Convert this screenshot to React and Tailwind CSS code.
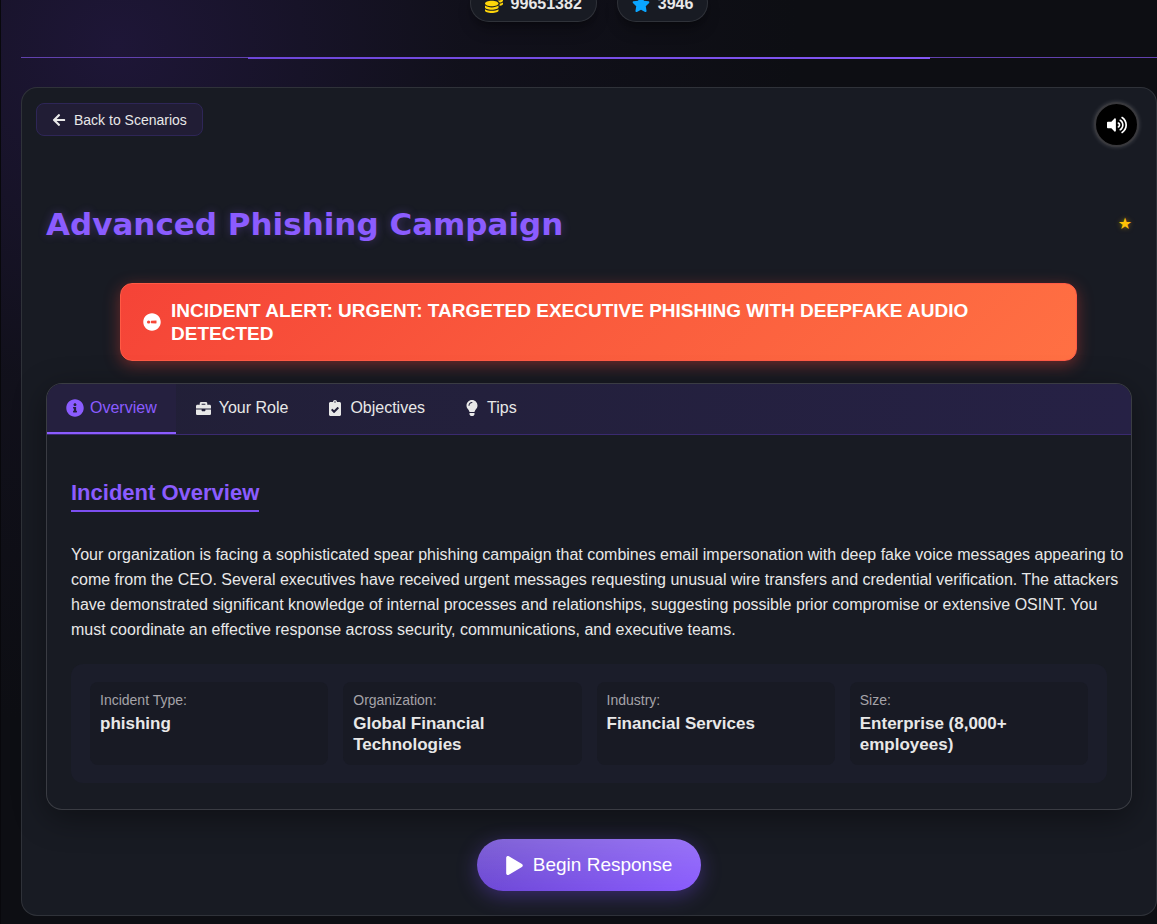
import { useState } from "react";
import {
  FaArrowLeft,
  FaBriefcase,
  FaClipboardCheck,
  FaCoins,
  FaExclamationCircle,
  FaInfoCircle,
  FaLightbulb,
  FaPlay,
  FaStar,
  FaVolumeUp,
} from "react-icons/fa";

const tabs = [
  { name: "Overview", Icon: FaInfoCircle, size: "size-[18px]" },
  { name: "Your Role", Icon: FaBriefcase, size: "size-[15px]" },
  { name: "Objectives", Icon: FaClipboardCheck, size: "h-4 w-3.5" },
  { name: "Tips", Icon: FaLightbulb, size: "h-4 w-3.5" },
];

const details = [
  ["Incident Type:", "phishing"],
  ["Organization:", "Global Financial Technologies"],
  ["Industry:", "Financial Services"],
  ["Size:", "Enterprise (8,000+ employees)"],
];

function Stat({ children }) {
  return (
    <div className="flex h-[38px] items-center gap-2 rounded-full border border-white/10 bg-[#181b23] px-3.5 pt-0.5 text-base font-bold text-[#e8e8e8] shadow-lg shadow-black/30">
      {children}
    </div>
  );
}

function Header() {
  return (
    <header>
      <div className="-mt-4 flex justify-center gap-5 border-b border-[#6141ae] pb-[35px]">
        <Stat>
          <FaCoins className="size-[18px] text-[#ffd60a]" />
          <span>99651382</span>
        </Stat>
        <Stat>
          <FaStar className="size-[18px] text-[#0aa5ff]" />
          <span>3946</span>
        </Stat>
      </div>
      <div className="mx-auto -mt-px h-0.5 w-3/5 bg-linear-to-r from-[#6d46d8] to-[#8357f5]" />
    </header>
  );
}

function Briefing() {
  const [active, setActive] = useState("Overview");
  return (
    <section className="mt-[22px] overflow-hidden rounded-2xl border border-white/15 bg-[#181b23] shadow-[0_8px_32px_rgba(0,0,0,0.4)]">
      <div role="tablist" className="flex border-b border-[#3a2a70] bg-linear-to-r from-[#211f36] to-[#262145]">
        {tabs.map(({ name, Icon, size }) => (
          <button
            key={name}
            type="button"
            role="tab"
            aria-selected={active === name}
            onClick={() => setActive(name)}
            className={
              active === name
                ? "flex h-[50px] items-center gap-1.5 border-b-2 border-[#8b5cff] bg-[#25203f] px-[19px] text-base text-[#8b5cff]"
                : "flex h-[50px] items-center gap-2 border-b-2 border-transparent px-5 text-base text-[#e8e8e8]"
            }
          >
            <Icon className={size} />
            {name}
          </button>
        ))}
      </div>
      <div className="px-6 pt-[45px] pb-[26px]">
        <h2 className="w-fit border-b-2 border-[#7c4ff0] pb-1 text-[22px] leading-[26px] font-bold text-[#8b5cff]">
          Incident Overview
        </h2>
        <p className="mt-[30px] -mr-5 text-base leading-[25px] text-[#e8e8e8]">
          Your organization is facing a sophisticated spear phishing campaign that combines email impersonation with
          deep fake voice messages appearing to come from the CEO. Several executives have received urgent messages
          requesting unusual wire transfers and credential verification. The attackers have demonstrated significant
          knowledge of internal processes and relationships, suggesting possible prior compromise or extensive OSINT.
          You must coordinate an effective response across security, communications, and executive teams.
        </p>
        <dl className="mt-[22px] grid grid-cols-4 gap-[15px] rounded-xl bg-[#1b1d2a] px-[19px] py-[18px]">
          {details.map(([label, value]) => (
            <div key={label} className="rounded-lg bg-[#181a24] p-2.5">
              <dt className="text-sm leading-4 text-[#a5a3a8]">{label}</dt>
              <dd className="mt-[5px] text-[17px] leading-[21px] font-bold text-[#e8e8e8]">{value}</dd>
            </div>
          ))}
        </dl>
      </div>
    </section>
  );
}

export default function App() {
  return (
    <div className="min-h-screen overflow-hidden border-l border-[#08080c] bg-[#0d0e13] bg-[radial-gradient(circle_at_10%_5%,#1e1637_0%,#14122199_25%,transparent_50%)] pb-2 pl-5 font-['Liberation_Sans',Arial,sans-serif]">
      <Header />
      <main className="mt-7 rounded-2xl border border-white/10 bg-[#181b23] pb-6">
        <div className="flex items-start justify-between pt-3.5 pr-[17px] pl-3.5">
          <button
            type="button"
            className="mt-px flex h-[33px] items-center gap-2 rounded-lg border border-[#2e2657] bg-[#211d35] px-[15px] text-sm text-[#e8e8e8]"
          >
            <FaArrowLeft className="size-3.5" />
            Back to Scenarios
          </button>
          <button
            type="button"
            aria-label="Toggle sound"
            className="flex size-[45px] items-center justify-center rounded-full border-2 border-[#38383c] bg-black text-white shadow-[0_0_4px_rgba(255,255,255,0.2)]"
          >
            <FaVolumeUp className="size-5" />
          </button>
        </div>
        <div className="px-6">
          <div className="mt-[53px] flex items-center justify-between">
            <h1 className="font-['DejaVu_Sans',sans-serif] text-[31px] leading-[48px] font-bold text-[#8b5cff] [text-shadow:0_0_10px_rgba(139,92,255,0.3)]">
              Advanced Phishing Campaign
            </h1>
            <span className="font-['DejaVu_Sans',sans-serif] text-base leading-4 text-[#ffc107] [text-shadow:0_0_5px_rgba(255,193,7,0.5)]">★</span>
          </div>
          <div
            role="alert"
            className="mt-[35px] mr-[55px] ml-[74px] flex items-center gap-2.5 rounded-xl border border-[#ff5a45] bg-linear-135 from-[#f54337] to-[#ff7043] px-[22px] py-[15px] text-[19px] leading-[23px] font-bold text-white shadow-[0_4px_16px_rgba(244,67,54,0.4)]"
          >
            <FaExclamationCircle className="size-[18px] shrink-0 rotate-90" />
            <p>INCIDENT ALERT: URGENT: TARGETED EXECUTIVE PHISHING WITH DEEPFAKE AUDIO DETECTED</p>
          </div>
          <Briefing />
          <button
            type="button"
            className="mx-auto mt-[29px] flex h-[52px] items-center gap-2.5 rounded-full bg-[linear-gradient(to_bottom,rgba(255,255,255,0.17),rgba(255,255,255,0)),linear-gradient(135deg,#6643cc,#8b5cff)] px-[29px] text-[19px] text-white shadow-[0_5px_20px_rgba(108,70,220,0.4)]"
          >
            <FaPlay className="h-[19px] w-[17px]" />
            Begin Response
          </button>
        </div>
      </main>
    </div>
  );
}
